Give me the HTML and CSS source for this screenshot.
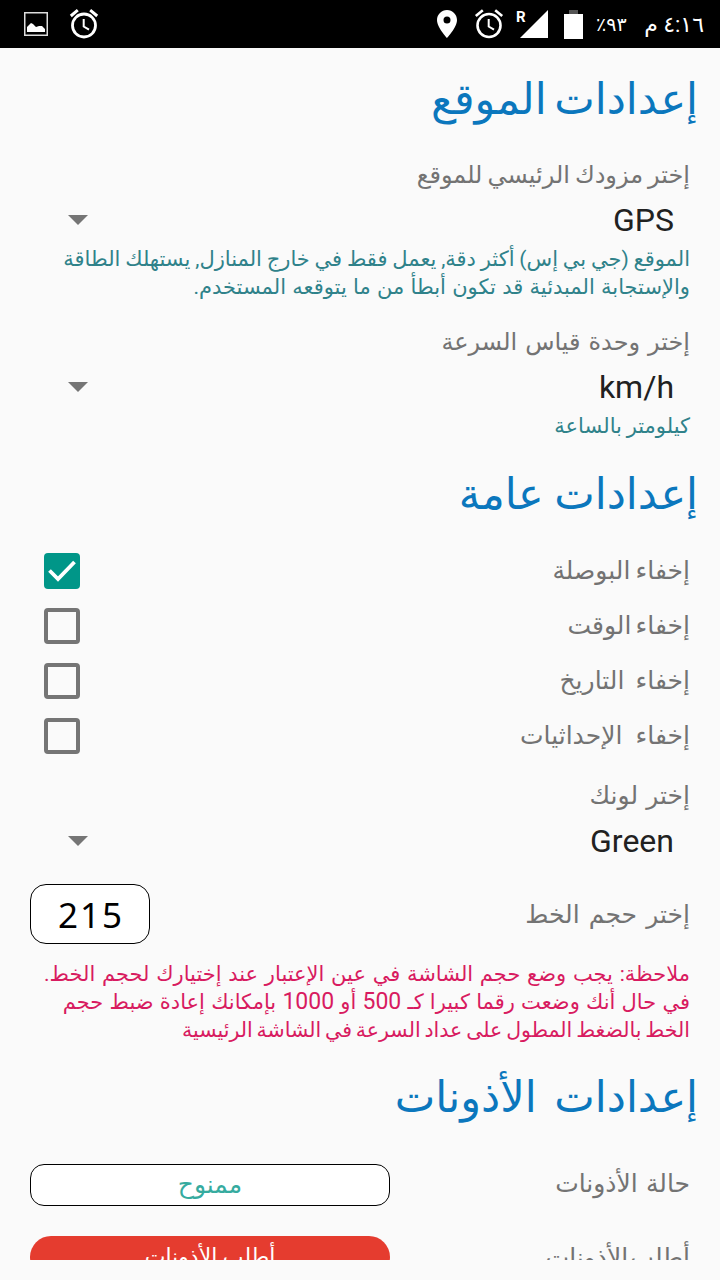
FILE: index.html
```html
<!DOCTYPE html>
<html lang="ar" dir="rtl">
<head>
  <meta charset="UTF-8" />
  <meta name="viewport" content="width=device-width, initial-scale=1.0"/>
  <title>الإعدادات</title>
  <link rel="stylesheet" href="styles.css">
</head>
<body>
  <header class="status-bar" dir="ltr">
    <svg class="icon-picture" width="24" height="24" viewBox="0 0 24 24">
      <rect x="0.75" y="0.75" width="22.5" height="22.5" fill="none" stroke="#ddd" stroke-width="1.5"/>
      <path d="M3 20v-5l4-4 2 1 3 3 3-1h3l3 3v3z" fill="#fff"/>
    </svg>
    <svg class="icon-alarm-left" width="30" height="30" viewBox="0 0 30 30" fill="none" stroke="#fff">
      <circle cx="15" cy="16.500" r="11.500" stroke-width="2.800"/>
      <path d="M1.800 7l7-5.800M28.200 7l-7-5.800" stroke-width="3"/>
      <path d="M14.700 10v7.500l5.300 3.200" stroke-width="2"/>
    </svg>
    <span class="spacer"></span>
    <svg class="icon-pin" width="20" height="28" viewBox="0 0 20 28">
      <path fill="#fff" fill-rule="evenodd" d="M10 0C4.500 0 0 4.500 0 10c0 7.500 10 18 10 18s10-10.500 10-18C20 4.500 15.500 0 10 0zm0 13.500a3.500 3.500 0 1 1 0-7 3.500 3.500 0 0 1 0 7z"/>
    </svg>
    <svg class="icon-alarm" width="30" height="30" viewBox="0 0 30 30" fill="none" stroke="#fff">
      <circle cx="15" cy="16.500" r="11.500" stroke-width="2.600"/>
      <path d="M1.800 7l7-5.800M28.200 7l-7-5.800" stroke-width="2.600"/>
      <path d="M14.700 10v7.500l5.300 3.200" stroke-width="2"/>
    </svg>
    <div class="signal">
      <span class="roaming">R</span>
      <svg width="28" height="28" viewBox="0 0 28 28"><path d="M28 0v28H0z" fill="#fff"/></svg>
    </div>
    <svg class="icon-battery" width="19" height="29" viewBox="0 0 19 29">
      <path d="M5 0h9v4H5z" fill="#555"/>
      <path d="M0 4h19v25H0z" fill="#fff"/>
    </svg>
    <span class="percent">٪٩٣</span>
    <span class="clock" dir="rtl">٤:١٦ م</span>
  </header>

  <main class="settings">
    <h2 class="tight">إعدادات الموقع</h2>
    <div class="label provider">إختر مزودك الرئيسي للموقع</div>
    <div class="select"><span>GPS</span><i class="arrow"></i></div>
    <p class="hint">الموقع (جي بي إس) أكثر دقة, يعمل فقط في خارج المنازل, يستهلك الطاقة<br><span class="wide">والإستجابة المبدئية قد تكون أبطأ من ما يتوقعه المستخدم.</span></p>

    <div class="label unit">إختر وحدة قياس السرعة</div>
    <div class="select"><span>km/h</span><i class="arrow"></i></div>
    <p class="hint">كيلومتر بالساعة</p>

    <h2>إعدادات عامة</h2>
    <div class="checks">
      <div class="check-row compass">
        <span>إخفاء البوصلة</span>
        <div class="box checked">
          <svg width="36" height="36" viewBox="0 0 36 36"><path d="M5.500 17.500l8.500 8.500L30.500 9" fill="none" stroke="#fff" stroke-width="3.800"/></svg>
        </div>
      </div>
      <div class="check-row time"><span>إخفاء الوقت</span><div class="box"></div></div>
      <div class="check-row date"><span>إخفاء التاريخ</span><div class="box"></div></div>
      <div class="check-row coords"><span>إخفاء الإحداثيات</span><div class="box"></div></div>
    </div>

    <div class="label color">إختر لونك</div>
    <div class="select"><span>Green</span><i class="arrow"></i></div>

    <div class="row size-row">
      <span>إختر حجم الخط</span>
      <div class="size-input">215</div>
    </div>
    <p class="note"><span class="line1">ملاحظة: يجب وضع حجم الشاشة في عين الإعتبار عند إختيارك لحجم الخط.</span><br><span class="line2">في حال أنك وضعت رقما كبيرا كـ <b>500</b> أو <b>1000</b> بإمكانك إعادة ضبط حجم</span><br><span class="line3">الخط بالضغط المطول على عداد السرعة في الشاشة الرئيسية</span></p>

    <h2 class="loose">إعدادات الأذونات</h2>
    <div class="row status-row">
      <span>حالة الأذونات</span>
      <div class="granted">ممنوح</div>
    </div>
    <div class="row request-row">
      <span>أطلب الأذونات</span>
      <div class="request">أطلب الأذونات</div>
    </div>
  </main>
</body>
</html>
```

FILE: styles.css
```css
:root {
  --bg: #fafafa;
  --title: #0b77bd;
  --label: #737373;
  --hint: #2f828a;
  --note: #d81b60;
  --accent: #009688;
}
* {
  box-sizing: border-box;
}
body {
  margin: 0;
  height: 1280px;
  overflow: hidden;
  background: var(--bg);
  font-family: Roboto, "DejaVu Sans", sans-serif;
  color: var(--label);
  white-space: nowrap;
}
.status-bar {
  height: 48px;
  padding: 0 16px 0 24px;
  display: flex;
  align-items: center;
  background: #000;
  color: #fff;
}
.icon-alarm-left {
  margin-left: 21px;
}
.spacer {
  flex: 1;
}
.icon-alarm {
  margin-left: 17px;
}
.signal {
  display: flex;
  align-items: flex-start;
  margin-left: 12px;
}
.roaming {
  width: 4px;
  font-size: 15px;
  line-height: 15px;
  font-weight: bold;
}
.icon-battery {
  margin-left: 16px;
}
.percent {
  width: 32px;
  margin-left: 13px;
  font-size: 19px;
}
.clock {
  width: 58px;
  margin-left: 18px;
  font-size: 22px;
}
.settings {
  height: 1212px;
  padding: 20px 30px 0;
  overflow: hidden;
}
h2 {
  height: 64px;
  margin: 0 -8px 0 0;
  font-size: 43px;
  line-height: 62px;
  font-weight: normal;
  color: var(--title);
}
h2.tight {
  word-spacing: -3px;
}
h2.loose {
  word-spacing: 7px;
}
.label {
  height: 40px;
  margin-top: 23px;
  font-size: 25px;
  line-height: 40px;
}
.label.provider {
  font-size: 24px;
  word-spacing: -1px;
}
.label.unit {
  margin-top: 21px;
  font-size: 24px;
  word-spacing: 2px;
}
.label.color {
  margin-top: 13px;
  word-spacing: 2px;
}
.select {
  height: 50px;
  padding: 0 16px 0 38px;
  display: flex;
  justify-content: space-between;
  align-items: center;
  font-size: 32px;
  color: #212121;
}
.arrow {
  border: 10px solid transparent;
  border-top-color: #757575;
  border-bottom: 0;
}
.hint, .note {
  margin: 0;
  font-size: 21px;
  line-height: 28px;
  color: var(--hint);
}
.hint {
  word-spacing: -0.4px;
}
.hint .wide {
  word-spacing: 1.1px;
}
.hint + h2 {
  margin-top: 23px;
}
.checks {
  margin-top: 16px;
}
.check-row {
  height: 55px;
  padding-left: 14px;
  display: flex;
  justify-content: space-between;
  align-items: center;
  font-size: 25px;
}
.compass {
  word-spacing: -1px;
}
.time {
  word-spacing: -2px;
}
.date {
  word-spacing: 5px;
}
.coords {
  word-spacing: 7px;
}
.box {
  width: 36px;
  height: 36px;
  border: 4px solid #757575;
  border-radius: 4px;
}
.box.checked {
  border: 0;
  background: var(--accent);
}
.row {
  display: flex;
  justify-content: space-between;
  align-items: center;
  font-size: 25px;
}
.size-row {
  margin-top: 18px;
  word-spacing: 3px;
}
.size-input {
  width: 120px;
  height: 60px;
  padding-left: 2px;
  border: 1px solid #000;
  border-radius: 16px;
  background: #fff;
  color: #000;
  font: 35px/60px "Noto Sans", sans-serif;
  letter-spacing: 2px;
  text-align: center;
}
.note {
  margin-top: 16px;
  color: var(--note);
}
.note b {
  font-size: 23px;
  line-height: 1;
  font-weight: normal;
}
.line1 {
  word-spacing: 1.5px;
}
.line2 {
  word-spacing: 1px;
}
.line3 {
  font-size: 20.5px;
  word-spacing: -1.2px;
}
.note + h2 {
  margin-top: 22px;
}
.status-row {
  margin-top: 34px;
  word-spacing: 2px;
}
.status-row > span {
  margin-top: -3px;
}
.granted, .request {
  width: 360px;
  text-align: center;
}
.granted {
  height: 42px;
  border: 1px solid #000;
  border-radius: 14px;
  line-height: 40px;
  background: #fff;
  color: #36ab9f;
}
.request-row {
  margin-top: 30px;
}
.request-row > span {
  word-spacing: -4px;
}
.request {
  height: 42px;
  border-radius: 24px;
  background: #e53c2f;
  color: #fff;
  font-size: 22px;
  line-height: 42px;
}
```
